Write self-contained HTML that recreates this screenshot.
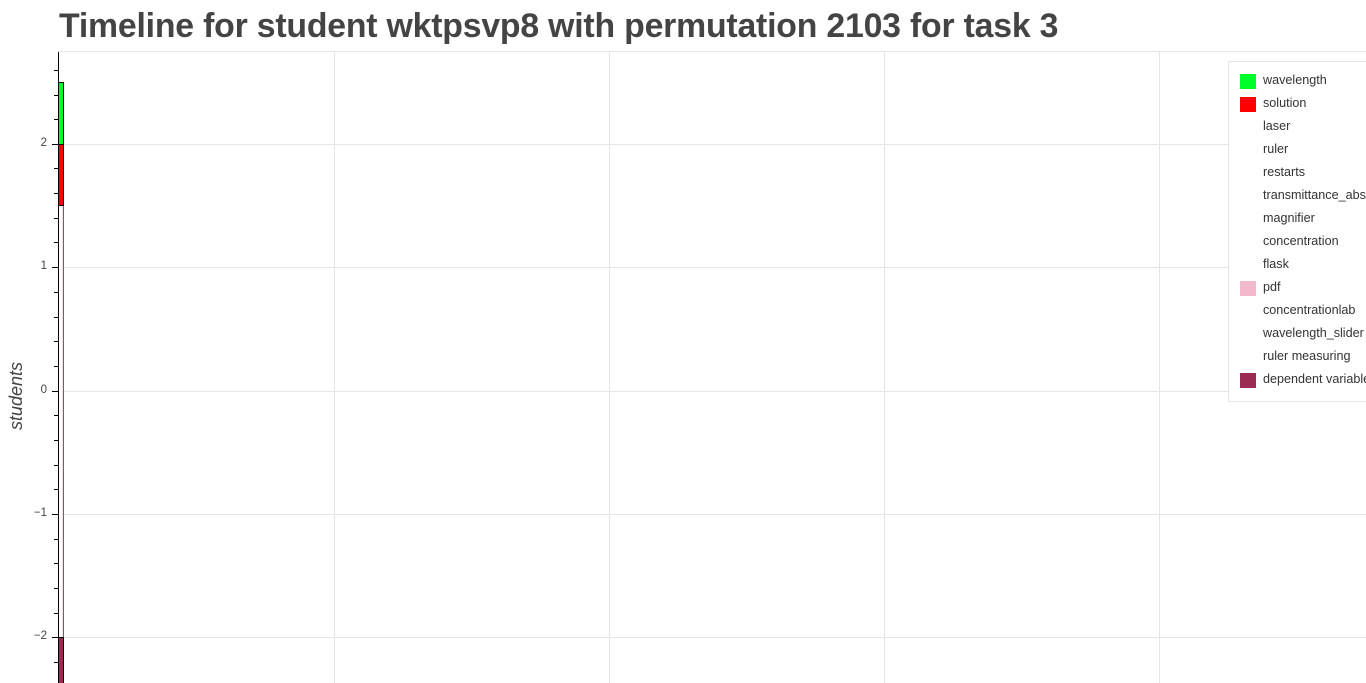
<!DOCTYPE html>
<html><head><style>
body{margin:0;width:1366px;height:683px;overflow:hidden;background:#fff;font-family:"Liberation Sans",Helvetica,Arial,sans-serif;position:relative}
.t{position:absolute;left:59px;top:7px;font-size:33.8px;font-weight:bold;color:#444;white-space:nowrap;letter-spacing:-0.2px}
.a{position:absolute}
.lg{position:absolute;left:1228px;top:61px;width:150px;height:339px;border:1px solid #e5e5e5;background:#fff}
.it{position:absolute;left:34px;font-size:12.6px;color:#333;white-space:nowrap}
.sw{position:absolute;left:11px;width:16px;height:15px}
.yl{position:absolute;font-size:11.5px;color:#444;text-align:right;width:30px;left:17px}
</style></head><body>
<div class="t">Timeline for student wktpsvp8 with permutation 2103 for task 3</div>
<svg class="a" style="left:0;top:0" width="1366" height="683">
<g stroke="#e5e5e5" stroke-width="1">
<line x1="58" y1="51.5" x2="1366" y2="51.5"/>
<line x1="334.5" y1="52" x2="334.5" y2="683"/><line x1="609.5" y1="52" x2="609.5" y2="683"/>
<line x1="884.5" y1="52" x2="884.5" y2="683"/><line x1="1159.5" y1="52" x2="1159.5" y2="683"/>
<line x1="58" y1="144.5" x2="1366" y2="144.5"/><line x1="58" y1="267.5" x2="1366" y2="267.5"/>
<line x1="58" y1="391.5" x2="1366" y2="391.5"/><line x1="58" y1="514.5" x2="1366" y2="514.5"/>
<line x1="58" y1="637.5" x2="1366" y2="637.5"/>
</g>
<rect x="58.5" y="82.5" width="5" height="62" fill="#00ff2a" stroke="#000"/>
<rect x="58.5" y="144.5" width="5" height="61" fill="#ff0000" stroke="#000"/>
<rect x="58.5" y="205.5" width="5" height="432" fill="#fff" stroke="#000"/>
<line x1="63" y1="206" x2="63" y2="637" stroke="#e8c0c8"/>
<rect x="58.5" y="637.5" width="5" height="50" fill="#9a2b55" stroke="#000"/>
<line x1="58.5" y1="52" x2="58.5" y2="683" stroke="#000"/>
<g stroke="#000">
<line x1="54" y1="70.5" x2="58" y2="70.5"/><line x1="54" y1="95.5" x2="58" y2="95.5"/><line x1="54" y1="119.5" x2="58" y2="119.5"/>
<line x1="52" y1="144.5" x2="58" y2="144.5"/><line x1="54" y1="168.5" x2="58" y2="168.5"/><line x1="54" y1="193.5" x2="58" y2="193.5"/>
<line x1="54" y1="218.5" x2="58" y2="218.5"/><line x1="54" y1="242.5" x2="58" y2="242.5"/>
<line x1="52" y1="267.5" x2="58" y2="267.5"/><line x1="54" y1="292.5" x2="58" y2="292.5"/><line x1="54" y1="317.5" x2="58" y2="317.5"/>
<line x1="54" y1="341.5" x2="58" y2="341.5"/><line x1="54" y1="366.5" x2="58" y2="366.5"/>
<line x1="52" y1="391.5" x2="58" y2="391.5"/><line x1="54" y1="415.5" x2="58" y2="415.5"/><line x1="54" y1="440.5" x2="58" y2="440.5"/>
<line x1="54" y1="465.5" x2="58" y2="465.5"/><line x1="54" y1="489.5" x2="58" y2="489.5"/>
<line x1="52" y1="514.5" x2="58" y2="514.5"/><line x1="54" y1="539.5" x2="58" y2="539.5"/><line x1="54" y1="563.5" x2="58" y2="563.5"/>
<line x1="54" y1="588.5" x2="58" y2="588.5"/><line x1="54" y1="613.5" x2="58" y2="613.5"/>
<line x1="52" y1="637.5" x2="58" y2="637.5"/><line x1="54" y1="662.5" x2="58" y2="662.5"/>
</g>
</svg>
<div class="yl" style="top:137px">2</div>
<div class="yl" style="top:260px">1</div>
<div class="yl" style="top:384px">0</div>
<div class="yl" style="top:507px">−1</div>
<div class="yl" style="top:630px">−2</div>
<div class="a" style="left:6px;top:430px;transform:rotate(-90deg);transform-origin:0 0;font-size:18px;font-style:italic;color:#444;width:80px">students</div>
<div class="lg">
<div class="sw" style="top:12px;background:#00ff2a"></div><div class="it" style="top:11px">wavelength</div>
<div class="sw" style="top:35px;background:#ff0000"></div><div class="it" style="top:34px">solution</div>
<div class="it" style="top:57px">laser</div>
<div class="it" style="top:80px">ruler</div>
<div class="it" style="top:103px">restarts</div>
<div class="it" style="top:126px">transmittance_absorbance</div>
<div class="it" style="top:149px">magnifier</div>
<div class="it" style="top:172px">concentration</div>
<div class="it" style="top:195px">flask</div>
<div class="sw" style="top:219px;background:#f2b8cc"></div><div class="it" style="top:218px">pdf</div>
<div class="it" style="top:241px">concentrationlab</div>
<div class="it" style="top:264px">wavelength_slider</div>
<div class="it" style="top:287px">ruler measuring</div>
<div class="sw" style="top:311px;background:#9a2b55"></div><div class="it" style="top:310px">dependent variable</div>
</div>
</body></html>
